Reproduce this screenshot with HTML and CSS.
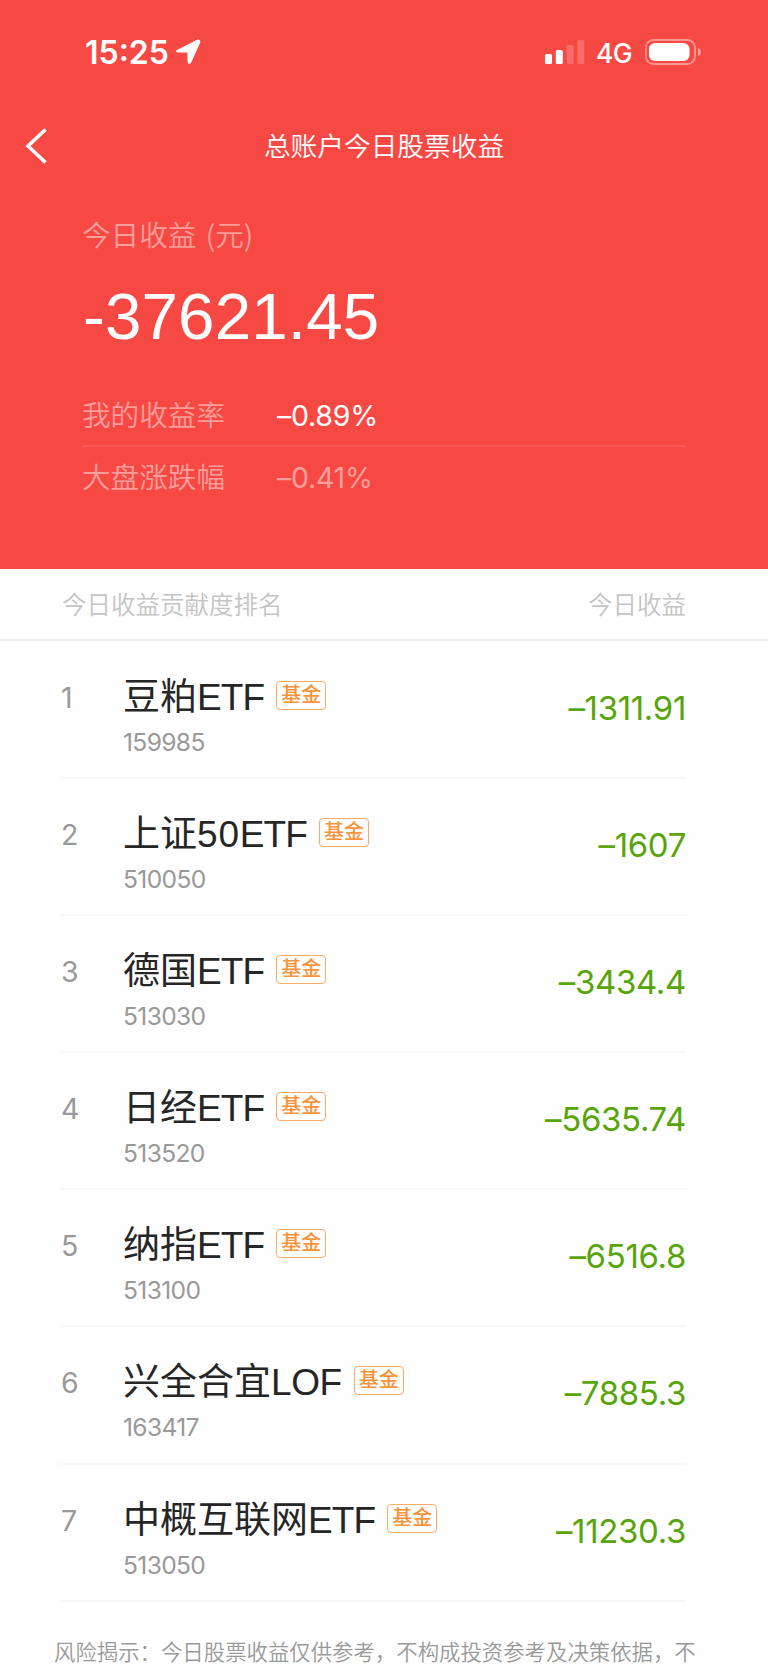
FILE: index.html
```
<!DOCTYPE html>
<html lang="zh-CN">
<head>
<meta charset="utf-8">
<meta name="viewport" content="initial-scale=1.0, width=device-width">
<title>总账户今日股票收益</title>
<link rel="stylesheet" href="styles.css">
</head>
<body>
<header class="hero">
  <div class="status">
    <span class="time">15:25</span>
    <svg class="loc" width="26" height="26" viewBox="0 0 26 26">
      <path d="M2 11 L21.5 1 Q26 -.6 25.2 3.6 L16.2 23.6 Q13.4 26.8 12.6 23 L12.4 14.4 Q12.4 13.6 11.6 13.6 L3 13.5 Q-.8 12.8 2 11Z" />
    </svg>
    <svg class="signal" width="40" height="26" viewBox="0 0 40 26">
      <rect x="0" y="15" width="7" height="10" rx="1.6" />
      <rect x="10.8" y="11" width="7" height="14" rx="1.6" />
      <rect class="dim" x="21.6" y="6" width="7" height="19" rx="1.6" />
      <rect class="dim" x="32.3" y="1" width="7" height="24" rx="1.6" />
    </svg>
    <span class="net">4G</span>
    <svg class="battery" width="57" height="27" viewBox="0 0 57 27">
      <rect class="shell" x="1" y="1" width="49" height="24" rx="7.5" />
      <rect x="4" y="4" width="40.5" height="18" rx="6" />
      <path class="cap" d="M53 9 Q55.8 10 55.8 13 Q55.8 16 53 17Z" />
    </svg>
  </div>
  <nav class="bar">
    <svg class="back" width="24" height="38" viewBox="0 0 24 38">
      <path d="M21.5 2.5 L4 19 L21.5 35.5" />
    </svg>
    <h1>总账户今日股票收益</h1>
  </nav>
  <div class="summary">
    <div class="label today">今日收益 (元)</div>
    <div class="total">-37621.45</div>
    <div class="rate mine"><span class="label">我的收益率</span><span class="pct">–0.89%</span></div>
    <div class="rate"><span class="label">大盘涨跌幅</span><span class="pct">–0.41%</span></div>
  </div>
</header>

<div class="listhead"><span>今日收益贡献度排名</span><span>今日收益</span></div>

<ul class="list">
  <li>
    <span class="rank">1</span>
    <div class="fund"><div class="name"><span>豆粕<span class="etf">ETF</span></span><span class="tag">基金</span></div><div class="code">159985</div></div>
    <span class="amount">–1311.91</span>
  </li>
  <li>
    <span class="rank">2</span>
    <div class="fund"><div class="name"><span>上证<span class="num">50</span><span class="etf">ETF</span></span><span class="tag">基金</span></div><div class="code">510050</div></div>
    <span class="amount">–1607</span>
  </li>
  <li>
    <span class="rank">3</span>
    <div class="fund"><div class="name"><span>德国<span class="etf">ETF</span></span><span class="tag">基金</span></div><div class="code">513030</div></div>
    <span class="amount">–3434.4</span>
  </li>
  <li>
    <span class="rank">4</span>
    <div class="fund"><div class="name"><span>日经<span class="etf">ETF</span></span><span class="tag">基金</span></div><div class="code">513520</div></div>
    <span class="amount">–5635.74</span>
  </li>
  <li>
    <span class="rank">5</span>
    <div class="fund"><div class="name"><span>纳指<span class="etf">ETF</span></span><span class="tag">基金</span></div><div class="code">513100</div></div>
    <span class="amount">–6516.8</span>
  </li>
  <li>
    <span class="rank">6</span>
    <div class="fund"><div class="name"><span>兴全合宜<span class="lof">LOF</span></span><span class="tag">基金</span></div><div class="code">163417</div></div>
    <span class="amount">–7885.3</span>
  </li>
  <li>
    <span class="rank">7</span>
    <div class="fund"><div class="name"><span>中概互联网<span class="etf">ETF</span></span><span class="tag">基金</span></div><div class="code">513050</div></div>
    <span class="amount">–11230.3</span>
  </li>
</ul>

<p class="risk">风险揭示：今日股票收益仅供参考，不构成投资参考及决策依据，不</p>
</body>
</html>
```
FILE: styles.css
```
html,body,div,h1,p,ul,li{margin:0;padding:0;}
*{box-sizing:border-box;}
body{
  height:1665px;
  overflow:hidden;
  background:#fefefe;
  color:#262626;
  font-family:"Liberation Sans","Noto Sans CJK SC",sans-serif;
}
svg{display:block;flex:none;}
.hero{
  height:569px;
  background:#f74944;
  color:#fff;
}
.status{
  display:flex;
  align-items:center;
  height:104px;
  padding:0 66px 0 85px;
  font-family:Inter,sans-serif;
}
.status svg{fill:#fff;}
.time{font-size:32px;font-weight:580;width:85px;white-space:nowrap;}
.loc{margin-left:5px;}
.signal{margin-left:auto;}
.signal .dim{opacity:.2;}
.net{font-size:26.5px;font-weight:500;letter-spacing:-.6px;width:37px;margin:2px 12px 0 11px;white-space:nowrap;}
.battery .shell{fill:none;stroke:#fff;stroke-width:1.8;opacity:.42;}
.battery .cap{opacity:.5;}
.bar{
  display:grid;
  grid-template-columns:56px 1fr 56px;
  align-items:center;
  height:84px;
}
.back{margin-left:24px;fill:none;stroke:#fff;stroke-width:3.6;}
h1{
  text-align:center;
  padding-top:1px;
  font-size:26.7px;
  line-height:40px;
  font-weight:350;
}
.summary{padding:25px 82px 0;}
.label{
  color:rgba(255,255,255,.48);
  font-size:28.6px;
  line-height:42px;
  font-weight:350;
}
.today{font-family:"Noto Sans CJK SC",sans-serif;word-spacing:3px;}
.total{
  font-size:65.5px;
  line-height:76px;
  letter-spacing:.15px;
  margin:24px 0 31px 1px;
}
.rate{
  display:flex;
  align-items:center;
  height:61px;
  color:rgba(255,255,255,.48);
}
.rate.mine{border-bottom:2px solid rgba(255,255,255,.09);}
.rate .label{width:195px;}
.pct{font:380 28.5px Inter,sans-serif;letter-spacing:-.25px;}
.mine .pct{color:#fff;}
.listhead{
  display:flex;
  justify-content:space-between;
  align-items:center;
  height:72px;
  padding:0 82px 2px 62px;
  border-bottom:2px solid #eee;
  color:#c4c4c4;
  font-size:24.5px;
  font-weight:350;
}
.list{list-style:none;padding:1px 82px 0 61px;}
.list li{
  display:flex;
  height:137.1px;
  border-bottom:2px solid #f8f8f8;
}
.rank{
  width:62px;
  padding-top:39px;
  color:#999;
  font:400 28.5px/34px Inter,sans-serif;
}
.fund{padding-top:28px;}
.name{
  display:flex;
  align-items:center;
  height:48px;
  font-size:37px;
  white-space:nowrap;
}
.etf{letter-spacing:-.9px;}
.lof{letter-spacing:-.4px;}
.num{letter-spacing:.8px;}
.tag{
  width:50px;
  height:29px;
  margin:3px 0 0 12px;
  border:1.5px solid #fbab66;
  border-radius:4px;
  color:#f8933a;
  font-size:20px;
  line-height:27px;
  font-weight:500;
  text-align:center;
}
.code{
  color:#999;
  font:400 24.6px/30px Inter,sans-serif;
  letter-spacing:-.65px;
  margin-top:9px;
}
.amount{
  margin-left:auto;
  padding-top:46px;
  color:#57a50a;
  font:380 33px/40px Inter,sans-serif;
  letter-spacing:-.35px;
}
.risk{
  padding:35px 0 0 54px;
  color:#999;
  font-size:21.4px;
  line-height:32px;
  font-weight:350;
  white-space:nowrap;
}
```
